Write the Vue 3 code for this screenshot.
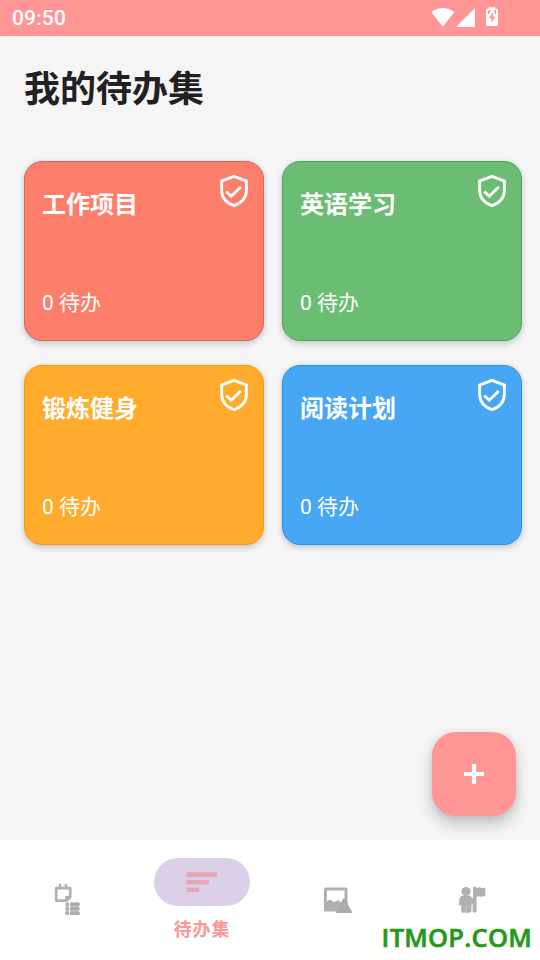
<script setup>
const cards = [
  { title: '工作项目', tone: 'coral' },
  { title: '英语学习', tone: 'green' },
  { title: '锻炼健身', tone: 'orange' },
  { title: '阅读计划', tone: 'blue' }
]
</script>

<template>
  <div class="screen">
    <header class="status">
      <span class="time">09:50</span>
      <svg class="signals" width="68" height="22" viewBox="0 0 68 22">
        <path d="M0.4 5.2Q11.8 -3.2 23.2 5.2L11.8 19.7Z" fill="#fff" />
        <path d="M44 1V20H25Z" fill="#fff" />
        <path d="M57.5 1.5V0.2H64V1.5H65.5Q67 1.5 67 3V17.5Q67 19 65.5 19H56.5Q55 19 55 17.5V3Q55 1.5 56.5 1.5Z" fill="#fff" />
        <path d="M62 4.8L58 11.2H60.5V16L64 9.7H61.9ZM57 3.5H60L58 7H57ZM63 3H65V7H64Z" fill="#ff9595" />
      </svg>
    </header>

    <main class="content">
      <h1>我的待办集</h1>
      <div class="grid">
        <section v-for="card in cards" :key="card.title" class="card" :class="card.tone">
          <div class="card-head">
            <h2>{{ card.title }}</h2>
            <svg class="shield" width="30" height="34" viewBox="0 0 30 34">
              <path d="M15 2.4L27.4 7.1V15.9C27.4 23.3 22.7 28.9 15 31.7C7.3 28.9 2.6 23.3 2.6 15.9V7.1Z" />
              <path d="M7.3 17.5L12.2 22.2L21.8 13" />
            </svg>
          </div>
          <p>0 待办</p>
        </section>
      </div>
      <button class="add" aria-label="新建">
        <svg width="20" height="20" viewBox="0 0 20 20">
          <path d="M10 2V18M2 10H18" stroke="#fff" stroke-width="4.2" stroke-linecap="square" />
        </svg>
      </button>
    </main>

    <nav>
      <div class="tab">
        <svg width="28" height="34" viewBox="0 0 28 34">
          <path d="M3.2 5.2H17.2V14.2L13.6 17.6H3.2Z" fill="none" stroke="#b0b0b0" stroke-width="2.7" stroke-linejoin="round" />
          <path d="M12 17.5V13H17.5Z" fill="#b0b0b0" />
          <path d="M6.9 2V4.5M12.9 2V4.5" fill="none" stroke="#b0b0b0" stroke-width="2.6" stroke-linecap="round" />
          <path d="M12.8 19.4H16V32H12.8ZM17 19.4H26V32H17Z" fill="#c6c6c6" />
          <path d="M14 21.2H14.4M14 25.7H14.4M14 30.2H14.4M18.6 21.2H25.2M18.6 25.7H25.2M18.6 30.2H25.2" fill="none" stroke="#adadad" stroke-width="3.6" stroke-linecap="round" />
        </svg>
      </div>
      <div class="tab active">
        <span class="pill">
          <svg width="32" height="20" viewBox="0 0 32 20">
            <path d="M0.4 0.3H31.4V5H0.4ZM0.4 7.9H22.8V12.5H0.4ZM0.4 15.4H13.2V20H0.4Z" fill="#e9a7b3" />
          </svg>
        </span>
        <span class="label">待办集</span>
      </div>
      <div class="tab">
        <svg width="31" height="30" viewBox="0 0 31 30">
          <path d="M3.4 3.9H24V25H3.4Z" fill="none" stroke="#b0b0b0" stroke-width="3" stroke-linejoin="round" />
          <path d="M4.5 17Q8.5 12.5 12 17.5Q16 13.5 19.5 18L17 25H4.5Z" fill="#b0b0b0" />
          <path d="M21.9 14.4L14.8 26.9H29Z" fill="#aaaaaa" stroke="#aaaaaa" stroke-width="2" stroke-linejoin="round" />
          <path d="M21.9 18V22M21.9 24V25" stroke="#b7b7b7" stroke-width="1.2" />
        </svg>
      </div>
      <div class="tab">
        <svg width="28" height="30" viewBox="0 0 28 30">
          <circle cx="8" cy="6.6" r="4.6" fill="#b0b0b0" />
          <path d="M4 10.8H12L15.4 14V19L13.4 20V26Q13.4 27.7 11.5 27.7H5Q3.2 27.7 3.2 26V20.5L.8 20.2L1.6 14Q2 11.4 4 10.8Z" fill="#b0b0b0" />
          <path d="M15 2.5Q15 1.5 16.2 1.5Q18.5 1.5 19 3Q21 1.7 23.3 2.8Q25.3 3.8 27.4 2.5V10.6Q24.5 12.2 22 11.4Q20 10.7 18.5 11.8V26Q18.5 27.7 16.7 27.7Q15 27.7 15 26Z" fill="#b0b0b0" />
          <path d="M8.2 21V27.5M14.3 20V27.5" stroke="#d0d0d0" stroke-width=".7" />
        </svg>
      </div>
      <span class="watermark">ITMOP.COM</span>
    </nav>
  </div>
</template>

<style>
body { margin: 0; }
</style>

<style scoped>
* { box-sizing: border-box; }
.screen {
  width: 540px;
  height: 960px;
  display: flex;
  flex-direction: column;
  overflow: hidden;
  background: #f5f5f5;
  font-family: Roboto, "Noto Sans CJK SC", sans-serif;
}
.status {
  height: 36px;
  flex: none;
  display: flex;
  justify-content: space-between;
  padding: 0 41px 0 12px;
  background: #ff9595;
  color: #fff;
}
.time { font-size: 21px; line-height: 36px; font-weight: 500; letter-spacing: .15px; }
.signals { margin-top: 7px; }
.content {
  flex: 1;
  position: relative;
  padding: 28px 18px 0 24px;
}
h1 {
  margin: 0;
  height: 97px;
  color: #212121;
  font-size: 36px;
  line-height: 52px;
  font-weight: 700;
}
.grid {
  display: grid;
  grid-template-columns: 240px 240px;
  gap: 24px 18px;
}
.card {
  height: 180px;
  padding: 12px 14px 0 17px;
  border: 1px solid;
  border-radius: 18px;
  color: #fff;
  box-shadow: 0 3px 6px rgba(0, 0, 0, .15), 0 0 6px rgba(0, 0, 0, .07);
}
.coral { background: #fd7f6b; border-color: #d36269; }
.green { background: #6abd72; border-color: #43a766; }
.orange { background: #ffab2d; border-color: #ff9800; }
.blue { background: #48a7f5; border-color: #2594ee; }
.card-head { display: flex; justify-content: space-between; height: 113px; }
h2 { margin: 13px 0 0; font-size: 24px; line-height: 36px; font-weight: 700; }
.shield { fill: none; stroke: #fff; stroke-width: 2.9; }
.card p { margin: 0; font-size: 21px; line-height: 32px; }
.add {
  position: absolute;
  right: 24px;
  bottom: 24px;
  width: 84px;
  height: 84px;
  padding: 0;
  border: 0;
  border-radius: 24px;
  display: grid;
  place-items: center;
  background: #ff9595;
  box-shadow: 0 8px 15px rgba(0, 0, 0, .21), 0 1px 6px rgba(0, 0, 0, .08);
}
nav {
  position: relative;
  height: 120px;
  flex: none;
  display: grid;
  grid-template-columns: 134px 136px 135px 134px;
  background: #fff;
}
.tab { display: flex; flex-direction: column; align-items: center; justify-content: center; }
.active { justify-content: flex-start; padding-top: 18px; }
.pill {
  width: 96px;
  height: 48px;
  border-radius: 24px;
  display: grid;
  place-items: center;
  background: #dad1e9;
}
.label {
  margin-top: 10px;
  color: #ff9595;
  font-size: 18px;
  line-height: 28px;
  font-weight: 700;
  letter-spacing: .9px;
}
.watermark {
  position: absolute;
  right: 8px;
  bottom: 5px;
  color: #269717;
  font-family: "Open Sans", sans-serif;
  font-size: 25.5px;
  line-height: 36px;
  font-weight: 600;
  letter-spacing: .25px;
  -webkit-text-stroke: .6px #269717;
}
</style>
